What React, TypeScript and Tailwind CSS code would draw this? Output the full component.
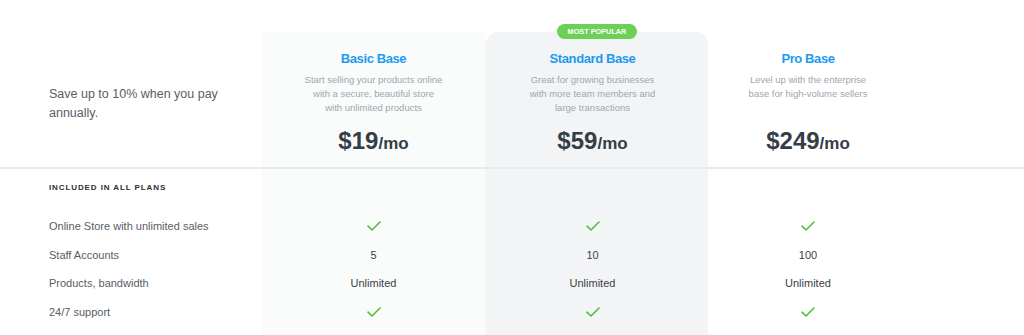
import React from "react";

type Plan = {
  name: string;
  lines: string[];
  price: string;
  popular?: boolean;
  values: (string | boolean)[];
};

const features = [
  "Online Store with unlimited sales",
  "Staff Accounts",
  "Products, bandwidth",
  "24/7 support",
];

const plans: Plan[] = [
  {
    name: "Basic Base",
    lines: [
      "Start selling your products online",
      "with a secure, beautiful store",
      "with unlimited products",
    ],
    price: "$19",
    values: [true, "5", "Unlimited", true],
  },
  {
    name: "Standard Base",
    lines: [
      "Great for growing businesses",
      "with more team members and",
      "large transactions",
    ],
    price: "$59",
    popular: true,
    values: [true, "10", "Unlimited", true],
  },
  {
    name: "Pro Base",
    lines: ["Level up with the enterprise", "base for high-volume sellers"],
    price: "$249",
    values: [true, "100", "Unlimited", true],
  },
];

// column shells: width, background, inner padding
const cols = [
  "w-[225px] bg-[#fafbfb]",
  "w-[222px] bg-[#f3f4f6] pr-[9px]",
  "w-[200px]",
];

function Check() {
  return (
    <svg width="14" height="10" viewBox="0 0 14 10" fill="none">
      <path
        d="M1 5.2 L5 9 L13 1"
        stroke="#4fbf3a"
        strokeWidth="1.6"
        strokeLinecap="round"
        strokeLinejoin="round"
      />
    </svg>
  );
}

export default function App() {
  return (
    <div
      className="w-[1024px] h-[335px] bg-white overflow-hidden"
      style={{ fontFamily: '"Liberation Sans", Arial, sans-serif' }}
    >
      {/* Header section */}
      <div className="flex h-[169px] pt-[32px] border-b-2 border-[#e9ebee]">
        <div className="w-[261px] pl-[49px] pr-[30px] pt-[53px]">
          <p className="text-[12.5px] leading-[19px] text-[#585e66]">
            Save up to 10% when you pay annually.
          </p>
        </div>

        {plans.map((plan, i) => (
          <div
            key={plan.name}
            className={`relative flex flex-col items-center pt-[18px] ${cols[i]} ${
              plan.popular ? "rounded-t-xl" : ""
            }`}
          >
            {plan.popular && (
              <div className="absolute top-[-8px] left-[71px] w-[80px] h-[15px] rounded-full bg-[#6ccf56] flex items-center justify-center">
                <span className="text-[7.3px] font-bold text-white leading-none">
                  MOST POPULAR
                </span>
              </div>
            )}
            <h3 className="text-[13px] leading-[18px] font-bold tracking-[-0.4px] text-[#1b9bf0]">
              {plan.name}
            </h3>
            <div className="mt-[5px] h-[42px] text-center text-[9.5px] leading-[14px] text-[#a0a6ae]">
              {plan.lines.map((l) => (
                <div key={l}>{l}</div>
              ))}
            </div>
            <div className="mt-[12px] flex items-baseline text-[#353d46] font-bold">
              <span className="text-[24px] leading-[28px]">{plan.price}</span>
              <span className="text-[17px] leading-[28px]">/mo</span>
            </div>
          </div>
        ))}
        <div className="flex-1" />
      </div>

      {/* Features section */}
      <div className="flex h-[166px]">
        <div className="w-[261px] pl-[49px] pt-[13px]">
          <div className="h-[12px] text-[8px] leading-[12px] font-bold tracking-[0.9px] text-[#2b2f33] mb-[18px]">
            INCLUDED IN ALL PLANS
          </div>
          {features.map((f) => (
            <div
              key={f}
              className="h-[28.5px] flex items-center text-[11px] text-[#585e66]"
            >
              {f}
            </div>
          ))}
        </div>

        {plans.map((plan, i) => (
          <div key={plan.name} className={`pt-[43px] ${cols[i]}`}>
            {plan.values.map((v, j) => (
              <div
                key={j}
                className="h-[28.5px] flex items-center justify-center text-[11px] text-[#3a3f45]"
              >
                {v === true ? <Check /> : v}
              </div>
            ))}
          </div>
        ))}
        <div className="flex-1" />
      </div>
    </div>
  );
}
